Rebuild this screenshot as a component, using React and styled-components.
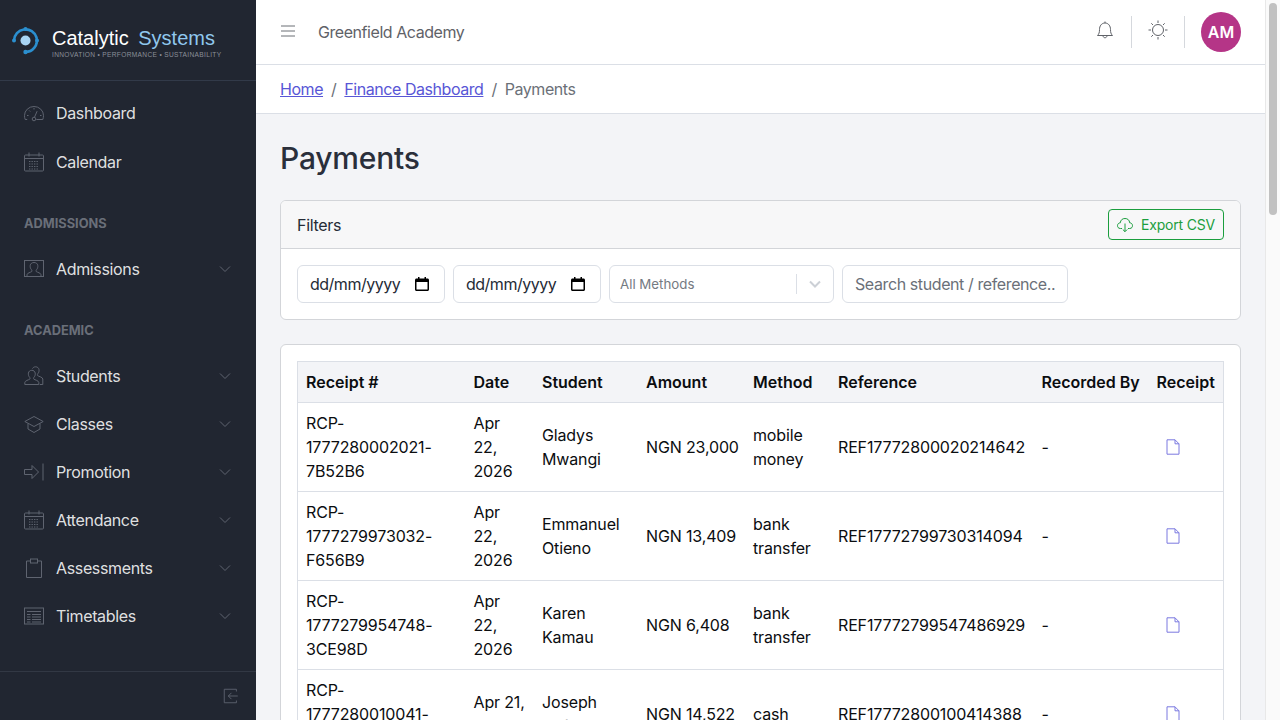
import React from 'react'
import styled, { createGlobalStyle } from 'styled-components'

const GlobalStyle = createGlobalStyle`
  * { box-sizing: border-box; }
  html, body { margin: 0; height: 100%; overflow: hidden; }
  body {
    font-family: Inter, "Liberation Sans", sans-serif;
    font-size: 16px;
    line-height: 1.5;
    color: #252b36;
    background: #f3f4f7;
  }
`

const Page = styled.div`
  display: flex;
  height: 720px;
  overflow: hidden;
`

const Sidebar = styled.aside`
  width: 256px;
  flex: none;
  display: flex;
  flex-direction: column;
  background: #212631;
  color: rgba(255, 255, 255, 0.87);
`

const Brand = styled.div`
  height: 81px;
  flex: none;
  display: flex;
  align-items: center;
  gap: 12px;
  padding-left: 11px;
  border-bottom: 1px solid #323a49;
`

const BrandText = styled.div`
  display: flex;
  flex-direction: column;
  padding-top: 6px;
  font-family: "Liberation Sans", Arial, sans-serif;
`

const BrandName = styled.div`
  font-size: 20px;
  line-height: 22px;
  color: #fff;
  white-space: pre;
`

const BrandAccent = styled.span`
  margin-left: 4px;
  color: #90c8ee;
`

const BrandTag = styled.div`
  font-size: 6.6px;
  line-height: 8px;
  margin-top: 2px;
  letter-spacing: 0.33px;
  color: #8a8f99;
  white-space: nowrap;
`

const Nav = styled.nav`
  flex: 1;
  display: flex;
  flex-direction: column;
  padding-top: 7px;
`

const NavItem = styled.div`
  height: ${props => props.$tall ? '49px' : '48px'};
  flex: none;
  display: flex;
  align-items: center;
  padding: 0 24px;
  font-size: 16px;
  letter-spacing: -0.35px;
  color: rgba(255, 255, 255, 0.87);
`

const NavIcon = styled.svg`
  width: 20px;
  height: 20px;
  margin-right: 12px;
  flex: none;
  fill: none;
  stroke: #5f6470;
  stroke-width: 1;
`

const CollapseIcon = styled(NavIcon)`
  width: 18px;
  height: 18px;
  margin-right: 0;
`

const NavLabel = styled.span`
  flex: 1;
`

const Chevron = styled.svg`
  width: 12px;
  height: 12px;
  margin-right: 1px;
  fill: none;
  stroke: #5f6470;
  stroke-width: 1;
`

const NavTitle = styled.div`
  height: 24px;
  margin-top: 26px;
  margin-bottom: 9px;
  padding: 0 24px;
  font-size: 12.8px;
  line-height: 24px;
  font-weight: 700;
  color: #6a6f79;
  text-transform: uppercase;
`

const SidebarFooter = styled.div`
  height: 49px;
  flex: none;
  display: flex;
  align-items: center;
  justify-content: flex-end;
  padding-right: 16px;
  border-top: 1px solid #323844;
`

const Main = styled.div`
  flex: 1;
  min-width: 0;
  display: flex;
  flex-direction: column;
`

const Header = styled.header`
  height: 65px;
  flex: none;
  display: flex;
  align-items: center;
  padding: 0 24px;
  background: #fff;
  border-bottom: 1px solid #dbdfe6;
`

const MenuIcon = styled.svg`
  width: 16px;
  height: 16px;
  margin: 0 22px 2px 0;
  stroke: #6b6e74;
  stroke-width: 1;
  fill: none;
`

const SchoolName = styled.div`
  flex: 1;
  margin-bottom: 1px;
  letter-spacing: -0.44px;
  color: #5f6268;
`

const HeaderIcon = styled.svg`
  width: 20px;
  height: 20px;
  margin-bottom: 4px;
  fill: none;
  stroke: #5f6268;
  stroke-width: 1;
`

const HeaderDivider = styled.div`
  width: 1px;
  height: 32px;
  margin: 0 16px;
  background: #d5d8dd;
`

const Avatar = styled.div`
  width: 40px;
  height: 40px;
  border-radius: 50%;
  display: flex;
  align-items: center;
  justify-content: center;
  background: #b53587;
  color: #fff;
  font-weight: 600;
`

const Breadcrumb = styled.div`
  height: 49px;
  flex: none;
  display: flex;
  align-items: center;
  padding: 0 24px;
  letter-spacing: -0.45px;
  background: #fff;
  border-bottom: 1px solid #dbdfe6;
`

const CrumbLink = styled.a`
  color: #5856d6;
  text-decoration: underline;
`

const CrumbSep = styled.span`
  padding: 0 8px;
  color: #6b7078;
`

const CrumbCurrent = styled.span`
  color: #6b7078;
`

const Content = styled.main`
  flex: 1;
  padding: 24px 24px 0;
  overflow: hidden;
`

const Title = styled.h1`
  margin: 0 0 23px;
  padding-top: 1px;
  font-size: 30px;
  line-height: 38.4px;
  font-weight: 500;
  letter-spacing: -0.2px;
  color: #2a2f3b;
`

const Card = styled.section`
  background: #fff;
  border: 1px solid #d3d5d9;
  border-radius: 6px;
  margin-bottom: 24px;
`

const CardHeader = styled.div`
  height: 48px;
  display: flex;
  align-items: center;
  justify-content: space-between;
  padding: 0 16px;
  letter-spacing: -0.3px;
  background: #f7f7f8;
  border-bottom: 1px solid #d3d5d9;
  border-radius: 5px 5px 0 0;
`

const ExportButton = styled.button`
  height: 31px;
  display: flex;
  align-items: center;
  gap: 8px;
  padding: 0 8px;
  font-family: inherit;
  font-size: 14px;
  letter-spacing: -0.2px;
  color: #1b9e3e;
  background: transparent;
  border: 1px solid #1b9e3e;
  border-radius: 4px;
`

const ExportIcon = styled.svg`
  width: 16px;
  height: 16px;
  fill: none;
  stroke: #1b9e3e;
  stroke-width: 1;
`

const Filters = styled.div`
  display: flex;
  gap: 8px;
  padding: 16px;
`

const DateField = styled.div`
  width: 148px;
  height: 38px;
  display: flex;
  align-items: center;
  justify-content: space-between;
  padding: 0 15px 0 12px;
  letter-spacing: -0.5px;
  border: 1px solid #dbdfe6;
  border-radius: 6px;
  color: #252b36;
`

const DateIcon = styled.svg`
  width: 14px;
  height: 14px;
  fill: #000;
`

const SelectField = styled.div`
  width: 225px;
  height: 38px;
  display: flex;
  align-items: center;
  padding-left: 10px;
  border: 1px solid #dbdfe6;
  border-radius: 6px;
  font-size: 13.3px;
  color: #757a82;
`

const SelectValue = styled.span`
  flex: 1;
  padding-top: 2px;
`

const SelectSep = styled.span`
  width: 1px;
  height: 20px;
  background: #dbdfe6;
`

const SelectArrow = styled.svg`
  width: 36px;
  height: 18px;
  fill: none;
  stroke: #ccd0d6;
  stroke-width: 2;
`

const SearchInput = styled.input`
  width: 226px;
  height: 38px;
  padding: 0 12px;
  font-family: inherit;
  font-size: 16px;
  letter-spacing: -0.4px;
  color: #252b36;
  border: 1px solid #dbdfe6;
  border-radius: 6px;
  outline: none;
  &::placeholder { color: #6b7078; opacity: 1; }
`

const TableWrap = styled.div`
  padding: 16px;
`

const Table = styled.table`
  width: 926px;
  table-layout: fixed;
  border-collapse: collapse;
  color: #0b0d10;
`

const Th = styled.th`
  width: ${props => props.$w}px;
  height: 41px;
  padding: 8px;
  text-align: left;
  font-weight: 600;
  white-space: nowrap;
  background: #f3f4f7;
  border: 1px solid #dbdfe6;
  border-width: 1px 0;
  &:first-child { border-left-width: 1px; }
  &:last-child { border-right-width: 1px; }
`

const Td = styled.td`
  padding: 8px;
  vertical-align: middle;
  letter-spacing: -0.15px;
  white-space: nowrap;
  border-bottom: 1px solid #dbdfe6;
  &:first-child { border-left: 1px solid #dbdfe6; }
  &:last-child { border-right: 1px solid #dbdfe6; }
`

const ReceiptLink = styled.a`
  display: block;
  width: 16px;
  margin-left: 8px;
  line-height: 0;
`

const FileIcon = styled.svg`
  width: 16px;
  height: 16px;
  fill: none;
  stroke: #7b79e0;
  stroke-width: 1;
`

const ScrollTrack = styled.div`
  width: 15px;
  flex: none;
  padding: 3px 3px 0;
  background: #fafafa;
  border-left: 1px solid #e8e8e8;
`

const ScrollThumb = styled.div`
  width: 8px;
  height: 212px;
  border-radius: 4px;
  background: #c1c1c1;
`

const calendarIcon = (
  <>
    <rect x="0.5" y="3" width="19" height="16" rx="1" />
    <path d="M0.5 6.5h19M5 0.5v4M15 0.5v4" />
    <path d="M5 9.5h10M5 12h10M5 14.5h10M5 17h10" strokeDasharray="1.4 1.1" />
  </>
)

const icons = {
  dashboard: (
    <>
      <path d="M3.2 16.5H1.2C.6 15 .5 13.8.5 12.5a9.5 9 0 0 1 19 0c0 1.3-.2 2.5-.7 4h-6.4" />
      <circle cx="10" cy="16" r="1.8" />
      <path d="M10.5 14.2l2.6-6M3 12.5h1.5M16 12.5h1.5M5.2 7.5l1 1M10 5v1.5" />
    </>
  ),
  calendar: calendarIcon,
  admissions: (
    <>
      <rect x="0.5" y="1.5" width="19" height="16" />
      <path d="M3 17.5v-1.8c0-1.6 3.7-2.4 4.7-3.1.4-.5.3-1.300-.3-2-1-1-1.400-2.600-1.200-4.100C6.500 4.500 8 3.500 10 3.500s3.500 1 3.800 3c.2 1.500-.2 3.100-1.200 4.100-.6.7-.7 1.500-.3 2 1 .7 4.700 1.500 4.700 3.100v1.800" />
    </>
  ),
  students: (
    <>
      <path d="M.8 18.500v-2c0-1.800 4-2.600 5-3.400.4-.5.3-1.300-.3-2-1-1-1.300-2.500-1.100-4 .3-1.800 1.700-2.800 3.400-2.800s3.100 1 3.400 2.800c.2 1.500-.1 3-1.100 4-.6.7-.7 1.500-.3 2 1 .8 5 1.600 5 3.400v2z" />
      <path d="M8.500 2.600C9 1.500 10.200.8 11.600.8c1.700 0 3.100 1 3.400 2.800.2 1.500-.1 3-1.100 4-.6.7-.7 1.500-.3 2 1 .8 5.200 1.600 5.200 3.400v5.500h-3" />
    </>
  ),
  classes: (
    <>
      <path d="M10 2.500L.8 7.500 10 12.500l9.200-5z" />
      <path d="M4 9.500v5.500l6 3.500 6-3.500V9.500" />
    </>
  ),
  promotion: (
    <>
      <path d="M.5 7.500h7.500V3.500l6.500 6.500-6.500 6.500v-4H.5z" />
      <path d="M19 1.500v17" />
    </>
  ),
  attendance: calendarIcon,
  assessments: (
    <>
      <path d="M6.500 3H2.500v16.500h15V3h-4" />
      <rect x="6.500" y="1" width="7" height="4" />
    </>
  ),
  timetables: (
    <>
      <rect x="0.500" y="2" width="19" height="16" />
      <path d="M3 5.500h14M3 8.500h3.500M3 11h3.500M3 13.500h3.500M3 16h3.500M8 8.500h9M8 11h9M8 13.500h9M8 16h9" />
    </>
  ),
  collapse: (
    <>
      <path d="M16 5V2.500H2.500v15H16V15" />
      <path d="M17.500 10H7M10.500 6.500L7 10l3.500 3.500" />
    </>
  ),
}

const Icon = ({ name }) => (
  <NavIcon viewBox="0 0 20 20">{icons[name]}</NavIcon>
)

const Item = ({ icon, children, open, tall }) => (
  <NavItem $tall={tall}>
    <Icon name={icon} />
    <NavLabel>{children}</NavLabel>
    {open && (
      <Chevron viewBox="0 0 12 12"><path d="M1 3.500l5 5 5-5" /></Chevron>
    )}
  </NavItem>
)

const Logo = () => (
  <svg width="29" height="29" viewBox="0 0 29 29" fill="none">
    <path d="M3 14.500A11.500 11.500 0 0 1 25.500 11.500A11.500 11.500 0 0 1 14 26" stroke="#2b8fcf" strokeWidth="2.600" />
    <circle cx="14.500" cy="14.500" r="5" fill="#a8d4f3" />
    <circle cx="3" cy="14.500" r="2" fill="#2b8fcf" />
    <circle cx="14.500" cy="3" r="2" fill="#2b8fcf" />
    <circle cx="26" cy="14.500" r="2" fill="#2b8fcf" />
    <circle cx="14.500" cy="26" r="2.200" fill="#2b8fcf" />
  </svg>
)

const payments = [
  { receipt: ['RCP-', '1777280002021-', '7B52B6'], date: ['Apr', '22,', '2026'], student: ['Gladys', 'Mwangi'], amount: 'NGN 23,000', method: ['mobile', 'money'], ref: 'REF17772800020214642' },
  { receipt: ['RCP-', '1777279973032-', 'F656B9'], date: ['Apr', '22,', '2026'], student: ['Emmanuel', 'Otieno'], amount: 'NGN 13,409', method: ['bank', 'transfer'], ref: 'REF17772799730314094' },
  { receipt: ['RCP-', '1777279954748-', '3CE98D'], date: ['Apr', '22,', '2026'], student: ['Karen', 'Kamau'], amount: 'NGN 6,408', method: ['bank', 'transfer'], ref: 'REF17772799547486929' },
  { receipt: ['RCP-', '1777280010041-', 'A91C3E'], date: ['Apr 21,', '2026'], student: ['Joseph', 'Anfo'], amount: 'NGN 14,522', method: ['cash'], ref: 'REF17772800100414388' },
]

const columns = [
  ['Receipt #', 168], ['Date', 68.5], ['Student', 104], ['Amount', 107],
  ['Method', 85], ['Reference', 203.5], ['Recorded By', 115], ['Receipt', 75],
]

const Lines = ({ parts }) => parts.map(part => <div key={part}>{part}</div>)

const App = () => (
  <Page>
    <GlobalStyle />
    <Sidebar>
      <Brand>
        <Logo />
        <BrandText>
          <BrandName>Catalytic <BrandAccent>Systems</BrandAccent></BrandName>
          <BrandTag>INNOVATION • PERFORMANCE • SUSTAINABILITY</BrandTag>
        </BrandText>
      </Brand>
      <Nav>
        <Item icon="dashboard" tall>Dashboard</Item>
        <Item icon="calendar" tall>Calendar</Item>
        <NavTitle>Admissions</NavTitle>
        <Item icon="admissions" open>Admissions</Item>
        <NavTitle>Academic</NavTitle>
        <Item icon="students" open>Students</Item>
        <Item icon="classes" open>Classes</Item>
        <Item icon="promotion" open>Promotion</Item>
        <Item icon="attendance" open>Attendance</Item>
        <Item icon="assessments" open>Assessments</Item>
        <Item icon="timetables" open>Timetables</Item>
      </Nav>
      <SidebarFooter><CollapseIcon viewBox="0 0 20 20">{icons.collapse}</CollapseIcon></SidebarFooter>
    </Sidebar>
    <Main>
      <Header>
        <MenuIcon viewBox="0 0 16 16"><path d="M1 3h14M1 8h14M1 13h14" /></MenuIcon>
        <SchoolName>Greenfield Academy</SchoolName>
        <HeaderIcon viewBox="0 0 20 20">
          <path d="M2.500 15.500c1.500-1.500 2-3 2-6 0-3.500 2-6.500 5.500-6.500s5.500 3 5.500 6.500c0 3 .5 4.500 2 6z" />
          <path d="M8 15.500c0 3 4 3 4 0M10 1.500V3" />
        </HeaderIcon>
        <HeaderDivider />
        <HeaderIcon viewBox="0 0 20 20">
          <circle cx="10" cy="10" r="5.500" />
          <path d="M10 .5v2.500M10 17v2.500M.5 10H3M17 10h2.500M3.300 3.300l1.700 1.700M15 15l1.700 1.700M3.300 16.700L5 15M15 5l1.700-1.700" />
        </HeaderIcon>
        <HeaderDivider />
        <Avatar>AM</Avatar>
      </Header>
      <Breadcrumb>
        <CrumbLink href="#">Home</CrumbLink>
        <CrumbSep>/</CrumbSep>
        <CrumbLink href="#">Finance Dashboard</CrumbLink>
        <CrumbSep>/</CrumbSep>
        <CrumbCurrent>Payments</CrumbCurrent>
      </Breadcrumb>
      <Content>
        <Title>Payments</Title>
        <Card>
          <CardHeader>
            <span>Filters</span>
            <ExportButton>
              <ExportIcon viewBox="0 0 16 16">
                <path d="M5 11.500H3.500C1 11.500.5 9.800.5 8.700.5 7 1.800 5.800 3.300 5.800 3.500 3 5.500 1.500 8 1.500s4.500 1.500 4.700 4.300c1.500 0 2.800 1.200 2.800 2.900 0 1.100-.5 2.800-3 2.800H11" />
                <path d="M8 6.500v8M5.800 12.500L8 14.700l2.200-2.200" />
              </ExportIcon>
              Export CSV
            </ExportButton>
          </CardHeader>
          <Filters>
            {[0, 1].map(i => (
              <DateField key={i}>
                dd/mm/yyyy
                <DateIcon viewBox="0 0 14 14">
                  <path d="M3 0h1.500v1.500h5V0H11v1.500h1.500c.8 0 1.500.7 1.500 1.500v9.500c0 .8-.7 1.500-1.500 1.500h-11C.7 14 0 13.300 0 12.500V3c0-.8.7-1.500 1.500-1.500H3zM1.500 5v7.500h11V5z" />
                </DateIcon>
              </DateField>
            ))}
            <SelectField>
              <SelectValue>All Methods</SelectValue>
              <SelectSep />
              <SelectArrow viewBox="0 0 36 18"><path d="M13 6.500l5 5 5-5" /></SelectArrow>
            </SelectField>
            <SearchInput placeholder="Search student / reference.." />
          </Filters>
        </Card>
        <Card>
          <TableWrap>
            <Table>
              <thead>
                <tr>
                  {columns.map(([label, w]) => <Th key={label} $w={w}>{label}</Th>)}
                </tr>
              </thead>
              <tbody>
                {payments.map(p => (
                  <tr key={p.ref}>
                    <Td><Lines parts={p.receipt} /></Td>
                    <Td><Lines parts={p.date} /></Td>
                    <Td><Lines parts={p.student} /></Td>
                    <Td>{p.amount}</Td>
                    <Td><Lines parts={p.method} /></Td>
                    <Td>{p.ref}</Td>
                    <Td>-</Td>
                    <Td>
                      <ReceiptLink href="#">
                        <FileIcon viewBox="0 0 16 16">
                          <path d="M2 .8h8l4 4v10.400H2zM10 .8v4h4" />
                        </FileIcon>
                      </ReceiptLink>
                    </Td>
                  </tr>
                ))}
              </tbody>
            </Table>
          </TableWrap>
        </Card>
      </Content>
    </Main>
    <ScrollTrack><ScrollThumb /></ScrollTrack>
  </Page>
)

export default App
